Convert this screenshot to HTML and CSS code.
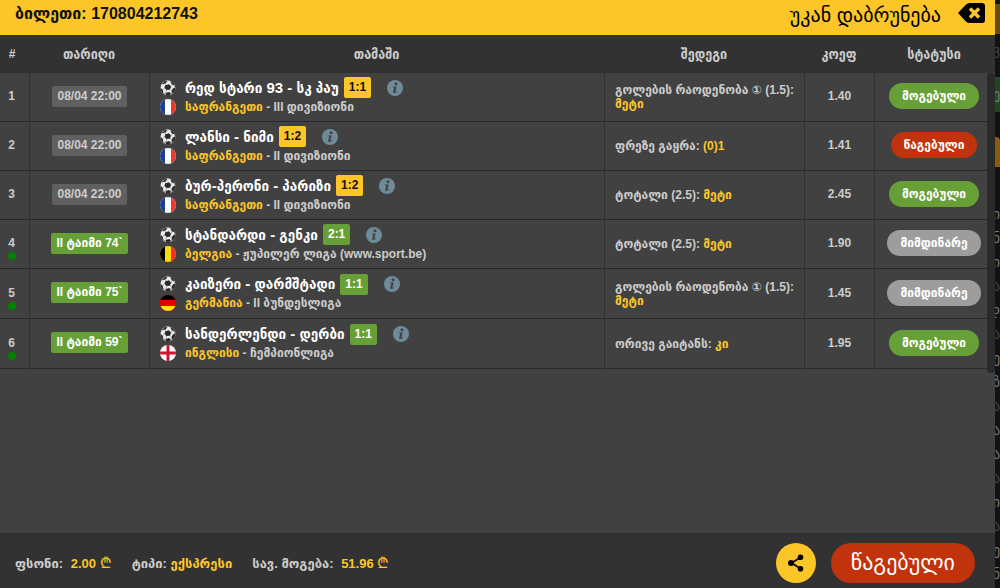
FILE: index.html
```html
<!DOCTYPE html>
<html lang="ka">
<head>
  <meta charset="UTF-8" />
  <meta name="viewport" content="width=device-width, initial-scale=1.0" />
  <title>ბილეთი: 170804212743</title>
  <link rel="stylesheet" href="styles.css">
</head>
<body>
  <svg class="sprite" aria-hidden="true">
    <symbol id="ball" viewBox="0 0 16 16">
      <circle cx="8" cy="8" r="7.600" fill="#a8a8a8"/>
      <circle cx="7.500" cy="7.200" r="6.600" fill="#ececec"/>
      <path d="M5.400 5.200l3.600-1 2.200 2.500-1.300 3.100-3.600.3L4.400 7.400z" fill="#2a2a2a"/>
      <path d="M1.500 4.400L4.600 1.300l2.900-.4-2 2.500zM10.300.9l2.800 1.700 1.700 3-3-1zM.4 7.700l2.500 2.200.4 3.500L1 11zM5.600 13l3.600-1 1.700 1.700-1.800 2-3-.2zM12.800 8.600l2.700-1.200-.7 3.900-2.300 2.500-.9-2.600z" fill="#2a2a2a"/>
      <path d="M5.600 5.200l-.4-2M11 6.700l1.300-2.200M9.800 9.600l2.200 1.600M6.400 9.900l-.3 3.300M4.600 7.400L2.600 10" stroke="#888" stroke-width=".7"/>
    </symbol>
    <symbol id="info" viewBox="0 0 16 16">
      <circle cx="8" cy="8" r="8" fill="#6f8b99"/>
      <circle cx="9" cy="3.800" r="1.500" fill="#414141"/>
      <path d="M5.700 6.400h4L8.400 11.300c-.1.6.3.6 1.400-.3l.4.500c-2 2-4.500 2-3.900-.3l1-3.900-1.700-.1z" fill="#414141"/>
    </symbol>
    <clipPath id="round"><circle cx="8" cy="8" r="8"/></clipPath>
    <symbol id="france" viewBox="0 0 16 16">
      <g clip-path="url(#round)"><path fill="#fff" d="M0 0h16v16H0z"/><path fill="#1d3f8f" d="M0 0h5v16H0z"/><path fill="#e8392f" d="M11 0h5v16h-5z"/></g>
    </symbol>
    <symbol id="belgium" viewBox="0 0 16 16">
      <g clip-path="url(#round)"><path fill="#fbd90a" d="M0 0h16v16H0z"/><path fill="#000" d="M0 0h5v16H0z"/><path fill="#ef2b2d" d="M11 0h5v16h-5z"/></g>
    </symbol>
    <symbol id="germany" viewBox="0 0 16 16">
      <g clip-path="url(#round)"><path fill="#e60000" d="M0 0h16v16H0z"/><path fill="#000" d="M0 0h16v5H0z"/><path fill="#ffe600" d="M0 11h16v5H0z"/></g>
    </symbol>
    <symbol id="england" viewBox="0 0 16 16">
      <g clip-path="url(#round)"><path fill="#fff" d="M0 0h16v16H0z"/><path fill="#d0142c" d="M6.500 0h3v16h-3zM0 6.500h16v3H0z"/></g>
    </symbol>
  </svg>

  <div class="page">
    <main class="ticket">
      <header class="topbar">
        <h1>ბილეთი: 170804212743</h1>
        <button class="back" type="button">უკან დაბრუნება
          <svg width="27" height="20" viewBox="0 0 27 20" aria-hidden="true"><path d="M0 10L8 1.500Q9.500 0 11.500 0H24q3 0 3 3v14q0 3-3 3H11.500q-2 0-3.500-1.500z"/><path d="M12 5.500l9 9M21 5.500l-9 9" stroke="#fcc629" stroke-width="3.500"/></svg>
        </button>
      </header>

      <div class="list">
        <table class="bets">
          <thead>
            <tr>
              <th class="col-num">#</th>
              <th class="col-date">თარიღი</th>
              <th>თამაში</th>
              <th class="col-result">შედეგი</th>
              <th class="col-coef">კოეფ</th>
              <th class="col-status">სტატუსი</th>
            </tr>
          </thead>
          <tbody>
            <tr>
              <td class="idx">1</td>
              <td class="date"><span class="tag">08/04 22:00</span></td>
              <td class="game">
                <div class="line"><svg class="ic"><use href="#ball"/></svg><b>რედ სტარი 93 - სკ პაუ</b><span class="score">1:1</span><svg class="ic"><use href="#info"/></svg></div>
                <div class="line league"><svg class="ic"><use href="#france"/></svg><span><em>საფრანგეთი</em> - III დივიზიონი</span></div>
              </td>
              <td class="result">გოლების რაოდენობა ① (1.5): <em>მეტი</em></td>
              <td class="coef">1.40</td>
              <td class="state"><span class="pill won">მოგებული</span></td>
            </tr>
            <tr>
              <td class="idx">2</td>
              <td class="date"><span class="tag">08/04 22:00</span></td>
              <td class="game">
                <div class="line"><svg class="ic"><use href="#ball"/></svg><b>ლანსი - ნიმი</b><span class="score">1:2</span><svg class="ic"><use href="#info"/></svg></div>
                <div class="line league"><svg class="ic"><use href="#france"/></svg><span><em>საფრანგეთი</em> - II დივიზიონი</span></div>
              </td>
              <td class="result">ფრეზე გაყრა: <em>(0)1</em></td>
              <td class="coef">1.41</td>
              <td class="state"><span class="pill lost">წაგებული</span></td>
            </tr>
            <tr>
              <td class="idx">3</td>
              <td class="date"><span class="tag">08/04 22:00</span></td>
              <td class="game">
                <div class="line"><svg class="ic"><use href="#ball"/></svg><b>ბურ-პერონი - პარიზი</b><span class="score">1:2</span><svg class="ic"><use href="#info"/></svg></div>
                <div class="line league"><svg class="ic"><use href="#france"/></svg><span><em>საფრანგეთი</em> - II დივიზიონი</span></div>
              </td>
              <td class="result">ტოტალი (2.5): <em>მეტი</em></td>
              <td class="coef">2.45</td>
              <td class="state"><span class="pill won">მოგებული</span></td>
            </tr>
            <tr>
              <td class="idx on">4</td>
              <td class="date"><span class="tag live">II ტაიმი 74`</span></td>
              <td class="game">
                <div class="line"><svg class="ic"><use href="#ball"/></svg><b>სტანდარდი - გენკი</b><span class="score live">2:1</span><svg class="ic"><use href="#info"/></svg></div>
                <div class="line league"><svg class="ic"><use href="#belgium"/></svg><span><em>ბელგია</em> - ჟუპილერ ლიგა (www.sport.be)</span></div>
              </td>
              <td class="result">ტოტალი (2.5): <em>მეტი</em></td>
              <td class="coef">1.90</td>
              <td class="state"><span class="pill">მიმდინარე</span></td>
            </tr>
            <tr class="tall">
              <td class="idx on">5</td>
              <td class="date"><span class="tag live">II ტაიმი 75`</span></td>
              <td class="game">
                <div class="line"><svg class="ic"><use href="#ball"/></svg><b>კაიზერი - დარმშტადი</b><span class="score live">1:1</span><svg class="ic"><use href="#info"/></svg></div>
                <div class="line league"><svg class="ic"><use href="#germany"/></svg><span><em>გერმანია</em> - II ბუნდესლიგა</span></div>
              </td>
              <td class="result">გოლების რაოდენობა ① (1.5): <em>მეტი</em></td>
              <td class="coef">1.45</td>
              <td class="state"><span class="pill">მიმდინარე</span></td>
            </tr>
            <tr class="tall">
              <td class="idx on">6</td>
              <td class="date"><span class="tag live">II ტაიმი 59`</span></td>
              <td class="game">
                <div class="line"><svg class="ic"><use href="#ball"/></svg><b>სანდერლენდი - დერბი</b><span class="score live">1:1</span><svg class="ic"><use href="#info"/></svg></div>
                <div class="line league"><svg class="ic"><use href="#england"/></svg><span><em>ინგლისი</em> - ჩემპიონლიგა</span></div>
              </td>
              <td class="result">ორივე გაიტანს: <em>კი</em></td>
              <td class="coef">1.95</td>
              <td class="state"><span class="pill won">მოგებული</span></td>
            </tr>
          </tbody>
        </table>
        <div class="scrollbar"></div>
      </div>

      <footer class="summary">
        <p>ფსონი: <em class="sum">2.00 <span class="lari">₾</span></em></p>
        <p>ტიპი: <em>ექსპრესი</em></p>
        <p>სავ. მოგება: <em class="sum">51.96 <span class="lari">₾</span></em></p>
        <button class="share" type="button" aria-label="გაზიარება">
          <svg width="16" height="18" viewBox="0 0 16 18" aria-hidden="true"><path d="M12.500 3.500L3.500 9l9 5.500" fill="none" stroke="#111" stroke-width="2"/><circle cx="12.500" cy="3.300" r="2.800"/><circle cx="3" cy="9" r="3"/><circle cx="12.500" cy="14.700" r="2.800"/></svg>
        </button>
        <button class="verdict" type="button">წაგებული</button>
      </footer>
    </main>

    <!-- edge of the dimmed page under the panel -->
    <div class="behind" aria-hidden="true">
      <div class="strip gold"></div>
      <p class="dim">ვ</p>
      <div class="strip green">ე</div>
      <div class="strip orange"></div>
      <p>ი</p>
      <p>ნ</p>
      <p>ი</p>
      <p class="dim">ა</p>
      <p>დ</p>
      <p class="dim">ა</p>
      <p>ე</p>
      <p>ზ</p>
      <p class="dim">ა</p>
      <p>ა</p>
      <p>ა</p>
      <p class="dim">ა</p>
      <p>ი</p>
      <p class="dim">ა</p>
      <p>ე</p>
      <p>ნ</p>
    </div>
  </div>
</body>
</html>
```
FILE: styles.css
```css
* {
  box-sizing: border-box;
}
body {
  margin: 0;
  font-family: "Liberation Sans", "DejaVu Sans", sans-serif;
  font-size: 12px;
  font-weight: bold;
  background: #111;
  color: #ccc;
}
h1, p {
  margin: 0;
}
em {
  font-style: normal;
  color: #fcc629;
}
button {
  font: inherit;
  border: none;
  cursor: pointer;
}
.sprite {
  position: absolute;
  width: 0;
  height: 0;
}
.page {
  display: flex;
  min-height: 100vh;
}
.ticket {
  flex: 1;
  display: flex;
  flex-direction: column;
  background: #414141;
}

.topbar {
  display: flex;
  justify-content: space-between;
  height: 35px;
  padding: 0 10px 0 15px;
  background: #fcc629;
  color: #111;
}
.topbar h1 {
  font-size: 16px;
  line-height: 27px;
}
.back {
  display: flex;
  gap: 17px;
  padding: 3px 0 0;
  background: none;
  color: #000;
  font-size: 20px;
  font-weight: normal;
  line-height: 24px;
}

.list {
  position: relative;
  flex: 1;
}
.bets {
  width: 100%;
  border-collapse: separate;
  border-spacing: 0;
  table-layout: fixed;
}
.bets th {
  height: 38px;
  padding: 0 2px 0 0;
  background: #323232;
  font-family: "Liberation Sans", "DejaVu Sans Condensed", sans-serif;
  font-size: 14px;
}
.bets .col-num {
  width: 30px;
  padding-right: 6px;
  font-size: 12px;
}
.col-date { width: 120px; }
.col-result { width: 200px; }
.col-coef { width: 70px; }
.col-status { width: 120px; }
.bets td {
  height: 49px;
  padding: 0 0 2px;
  text-align: center;
  border-right: 1px solid #303030;
  border-bottom: 1px solid #282828;
}
.bets .tall td {
  height: 50px;
}
.bets td:last-child {
  padding-right: 2px;
  border-right: none;
}
.bets .idx {
  position: relative;
  padding-right: 6px;
}
.idx.on::after {
  content: "";
  position: absolute;
  left: 8px;
  bottom: 8px;
  width: 8px;
  height: 8px;
  border-radius: 50%;
  background: #008000;
}
.tag {
  display: inline-block;
  padding: 0 5px;
  border-radius: 2px;
  line-height: 21px;
  vertical-align: middle;
  background: #606060;
}
.live {
  background: #67a036;
  color: #fff;
}
.bets .game {
  padding: 0 10px 2px;
  text-align: left;
}
.line {
  display: flex;
  align-items: center;
  height: 21px;
  color: #fff;
}
.line b {
  font-family: "Liberation Sans", "DejaVu Sans Condensed", sans-serif;
  font-size: 15px;
}
.league {
  height: 17px;
  color: #ccc;
}
.ic {
  width: 16px;
  height: 16px;
  margin-right: 9px;
}
.score {
  margin: 0 16px 0 5px;
  padding: 0 5px;
  border-radius: 2px;
  line-height: 21px;
  background: #fcc629;
  color: #111;
}
.score.live {
  background: #67a036;
  color: #fff;
}
.bets .result {
  padding: 0 5px 0 10px;
  line-height: 14px;
  text-align: left;
}
.pill {
  display: inline-block;
  padding: 0 13px;
  border-radius: 13px;
  line-height: 26px;
  vertical-align: middle;
  background: #9d9d9d;
  color: #fff;
}
.pill.won {
  background: #67a036;
}
.pill.lost {
  background: #c0330c;
}
.scrollbar {
  position: absolute;
  top: 38px;
  right: 0;
  width: 8px;
  height: 300px;
  border-radius: 4px;
  background: #2a2a2a;
}

.summary {
  display: flex;
  align-items: center;
  gap: 20px;
  height: 55px;
  padding: 5px 20px 0 15px;
  background: #323232;
  font-size: 13px;
}
.sum {
  margin-left: 4px;
}
.lari {
  font-size: 15px;
  font-weight: normal;
  line-height: 13px;
}
.share {
  width: 40px;
  height: 40px;
  margin-left: auto;
  padding: 3px 0 0;
  border-radius: 50%;
  background: #fcc629;
}
.verdict {
  height: 40px;
  margin-left: -5px;
  padding: 0 20px;
  border-radius: 20px;
  background: #c0330c;
  color: #fff;
  font-size: 22px;
  font-weight: normal;
}

.behind {
  width: 5px;
  padding-top: 4px;
  overflow: hidden;
  background: #111315;
  color: #777;
  font-size: 14px;
  font-weight: normal;
  direction: rtl;
}
.behind p {
  height: 24px;
  line-height: 24px;
}
.behind .dim {
  color: #444;
}
.strip {
  height: 30px;
}
.gold {
  margin-bottom: 4px;
  background: #654f10;
}
.green {
  height: 35px;
  margin: 15px 0 25px;
  line-height: 35px;
  background: #1d4a1c;
}
.orange {
  margin-bottom: 35px;
  border-radius: 0 4px 0 0;
  background: #8a5c0b;
}
```
